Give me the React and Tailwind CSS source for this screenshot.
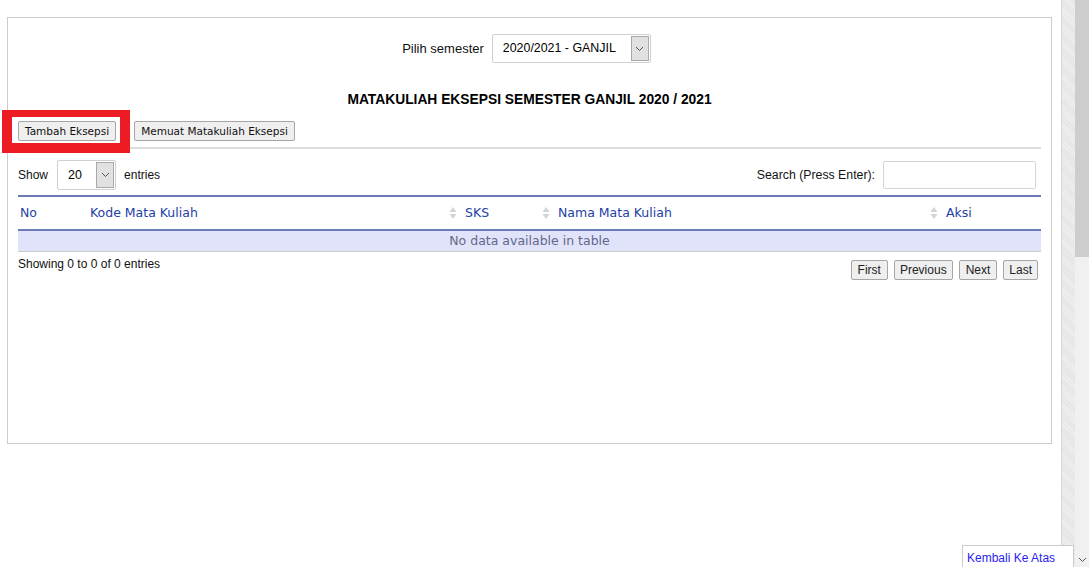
import React from 'react';

function Chevron({ className = '' }) {
  return (
    <svg width="9" height="6" viewBox="0 0 9 6" className={className}>
      <path d="M1 1l3.5 3.5L8 1" fill="none" stroke="#555" strokeWidth="1" />
    </svg>
  );
}

function SortIcon() {
  return (
    <svg width="8" height="14" viewBox="0 0 8 14" className="shrink-0">
      <path d="M4 1L7.5 6H0.5z" fill="#d4d4d4" />
      <path d="M4 13L7.5 8H0.5z" fill="#d4d4d4" />
    </svg>
  );
}

function SelectBox({ value, width, height, arrowW }) {
  return (
    <div
      className="flex items-stretch rounded-[2px] border border-[#cfcfcf] bg-white"
      style={{ width, height }}
    >
      <div className="flex flex-1 items-center pl-[10px] text-[12.4px] text-black">{value}</div>
      <div
        className="my-[1px] mr-[1px] flex items-center justify-center border border-[#a9a9a9] bg-[#e1e1e1]"
        style={{ width: arrowW }}
      >
        <Chevron />
      </div>
    </div>
  );
}

function Btn({ children, className = '' }) {
  return (
    <button
      className={`h-[20px] rounded-[2px] border border-[#a6a6a6] bg-[#efefef] px-[6px] text-[10.5px] leading-none text-[#111] ${className}`}
      style={{ fontFamily: '"DejaVu Sans", Verdana, sans-serif' }}
    >
      {children}
    </button>
  );
}

function PageBtn({ children, className = 'px-[6px]' }) {
  return (
    <button className={`h-[20px] rounded-[2px] border border-[#a6a6a6] bg-[#efefef] text-[12px] leading-none text-[#222] ${className}`}>
      {children}
    </button>
  );
}

const headers = [
  { label: 'No', w: 'w-[70px]', sort: false },
  { label: 'Kode Mata Kuliah', w: 'w-[375px]', sort: true },
  { label: 'SKS', w: 'w-[93px]', sort: true },
  { label: 'Nama Mata Kuliah', w: 'w-[388px]', sort: true },
  { label: 'Aksi', w: 'flex-1', sort: false },
];

export default function App() {
  return (
    <div
      className="relative flex h-[567px] w-[1089px] overflow-hidden bg-white text-[12px] text-[#111]"
      style={{ fontFamily: '"Liberation Sans", Arial, sans-serif' }}
    >
      {/* page */}
      <div className="w-[1061px] shrink-0 pl-[7px] pt-[17px]">
        <div className="h-[427px] w-[1045px] border border-[#cccccc] px-[10px] pt-[16px]">
          <div className="flex items-center justify-center gap-[8px] pr-[6px]">
            <span className="text-[13px]">Pilih semester</span>
            <SelectBox value="2020/2021 - GANJIL" width={159} height={29} arrowW={18} />
          </div>

          <h2 className="mt-[29px] text-center text-[13.8px] font-bold leading-[16px] text-black">
            MATAKULIAH EKSEPSI SEMESTER GANJIL 2020 / 2021
          </h2>

          <div className="mt-[13px] flex gap-[18px]">
            <Btn>Tambah Eksepsi</Btn>
            <Btn>Memuat Matakuliah Eksepsi</Btn>
          </div>

          <div className="mt-[6px] h-[2px] bg-[#dddddd]" />

          <div className="mt-[11px] flex items-center justify-between">
            <div className="flex items-center">
              <span>Show</span>
              <div className="ml-[9px]">
                <SelectBox value="20" width={59} height={30} arrowW={18} />
              </div>
              <span className="ml-[8px]">entries</span>
            </div>
            <div className="flex items-center">
              <span className="text-[12.3px]">Search (Press Enter):</span>
              <input className="ml-[8px] mr-[5px] h-[28px] w-[153px] rounded-[2px] border border-[#d5d5d5] outline-none" />
            </div>
          </div>

          <div
            className="mt-[5px] border-t-2 border-[#6b7bb6]"
            style={{ fontFamily: '"DejaVu Sans", Verdana, sans-serif' }}
          >
            <div className="flex h-[34px] items-center border-b-2 border-[#6b7bb6] text-[12.5px] text-[#2340a6]">
              {headers.map((h) => (
                <div key={h.label} className={`${h.w} flex h-full items-center justify-between pl-[2px] pr-[6px]`}>
                  <span>{h.label}</span>
                  {h.sort && <SortIcon />}
                </div>
              ))}
            </div>
            <div className="flex h-[21px] items-center justify-center border-b border-[#cccccc] bg-[#e1e3fb] text-[12.5px] text-[#63678a]">
              No data available in table
            </div>
          </div>

          <div className="mt-[5px] flex items-start justify-between">
            <span className="leading-[14px]">Showing 0 to 0 of 0 entries</span>
            <div className="mr-[3px] mt-[3px] flex gap-[6px]">
              <PageBtn>First</PageBtn>
              <PageBtn className="px-[5px]">Previous</PageBtn>
              <PageBtn>Next</PageBtn>
              <PageBtn className="px-[5px]">Last</PageBtn>
            </div>
          </div>
        </div>
      </div>

      {/* textured strip */}
      <div
        className="h-full w-[14px] shrink-0 border-l border-[#d8d8d8] bg-[#ebebeb]"
        style={{
          backgroundImage:
            'repeating-linear-gradient(45deg, #e4e4e4 0 1px, #efefef 1px 2px), repeating-linear-gradient(-45deg, rgba(0,0,0,0.03) 0 1px, transparent 1px 3px)',
        }}
      />

      {/* scrollbar */}
      <div className="flex h-full w-[14px] shrink-0 flex-col bg-[#f0f0f0]">
        <div className="h-[257px] w-full bg-[#cdcdcd]" />
        <div className="flex-1" />
        <div className="flex h-[14px] items-center justify-center">
          <Chevron />
        </div>
      </div>

      {/* annotation highlight */}
      <div className="pointer-events-none absolute left-[2px] top-[110px] h-[43px] w-[128px] border-x-[10px] border-b-[10px] border-t-[7px] border-[#ed1c24]" />

      {/* back to top */}
      <div className="absolute left-[962px] top-[545px] h-[24px] w-[112px] border border-[#cccccc] bg-white pl-[4px] pt-[3px] text-[12px] text-[#2b1cf0]">
        Kembali Ke Atas
      </div>
    </div>
  );
}
